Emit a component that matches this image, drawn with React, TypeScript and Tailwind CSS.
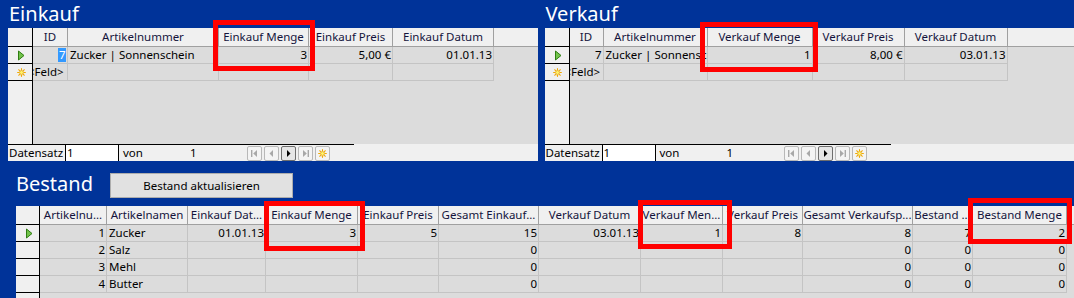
import React from 'react';

type Align = 'l' | 'r';

function PlayIcon() {
    return (
        <svg width="8" height="11" viewBox="0 0 8 11">
            <path d="M1.5 1 L7 5.5 L1.5 10 Z" fill="#72c34b" stroke="#2f7d12" strokeWidth="1" strokeLinejoin="round" />
        </svg>
    );
}

function SunIcon() {
    return (
        <svg width="9" height="9" viewBox="0 0 10 10">
            <g stroke="#f0a800" strokeWidth="1.2" strokeLinecap="round">
                <line x1="5" y1="0.7" x2="5" y2="2" />
                <line x1="5" y1="8" x2="5" y2="9.3" />
                <line x1="0.7" y1="5" x2="2" y2="5" />
                <line x1="8" y1="5" x2="9.3" y2="5" />
                <line x1="1.9" y1="1.9" x2="2.8" y2="2.8" />
                <line x1="7.2" y1="7.2" x2="8.1" y2="8.1" />
                <line x1="8.1" y1="1.9" x2="7.2" y2="2.8" />
                <line x1="1.9" y1="8.1" x2="2.8" y2="7.2" />
            </g>
            <circle cx="5" cy="5" r="2.2" fill="#fff36b" stroke="#e59a00" strokeWidth="0.8" />
        </svg>
    );
}

function NavBtn({ children, active }: { children: React.ReactNode; active?: boolean }) {
    return (
        <div
            className={
                active
                    ? 'w-[15px] h-[15px] border border-[#6e6e6e] rounded-[2px] bg-[#e6e6e6] flex items-center justify-center'
                    : 'w-[15px] h-[15px] border border-[#b8b8b8] rounded-[2px] bg-[#f4f4f4] flex items-center justify-center'
            }
        >
            {children}
        </div>
    );
}

function NavBar() {
    return (
        <div className="flex h-[17px] bg-[#f0f0f0]">
            <div className="flex w-[346px] border-t border-black">
                <div className="w-[57px] pl-[1px] flex items-center leading-none overflow-hidden whitespace-nowrap">Datensatz</div>
                <div className="w-[54px] bg-white border-x border-black pl-[1px] flex items-center leading-none">1</div>
                <div className="w-[67px] pl-[4px] flex items-center leading-none">von</div>
                <div className="w-[61px] pl-[4px] flex items-center leading-none">1</div>
                <div className="flex gap-[2px] pt-[1px]">
                    <NavBtn>
                        <svg width="9" height="9" viewBox="0 0 9 9">
                            <rect x="1" y="1" width="1.4" height="7" fill="#a8a8a8" />
                            <path d="M7 1 L3.2 4.5 L7 8 Z" fill="#a8a8a8" />
                        </svg>
                    </NavBtn>
                    <NavBtn>
                        <svg width="9" height="9" viewBox="0 0 9 9">
                            <path d="M6 1 L2.5 4.5 L6 8 Z" fill="#a8a8a8" />
                        </svg>
                    </NavBtn>
                    <NavBtn active>
                        <svg width="9" height="9" viewBox="0 0 9 9">
                            <path d="M3 1 L6.5 4.5 L3 8 Z" fill="#000" />
                        </svg>
                    </NavBtn>
                    <NavBtn>
                        <svg width="9" height="9" viewBox="0 0 9 9">
                            <path d="M2 1 L5.8 4.5 L2 8 Z" fill="#a8a8a8" />
                            <rect x="6.6" y="1" width="1.4" height="7" fill="#a8a8a8" />
                        </svg>
                    </NavBtn>
                    <NavBtn>
                        <SunIcon />
                    </NavBtn>
                </div>
            </div>
            <div className="flex-1" />
        </div>
    );
}

function HeaderRow({ tpl, labels }: { tpl: string; labels: string[] }) {
    return (
        <div className={`grid ${tpl} h-[19px]`}>
            <div className="bg-[#f0f0f0] border-r border-b border-black" />
            {labels.map((l, i) => (
                <div
                    key={i}
                    className="bg-[#f0f0f0] border-r border-b border-[#a0a0a0] flex items-center justify-center overflow-hidden whitespace-nowrap text-[#14143c]"
                >
                    {l}
                </div>
            ))}
            <div className="bg-[#f0f0f0] border-b border-[#a0a0a0]" />
        </div>
    );
}

function DataRow({
    tpl,
    marker,
    cells,
    aligns,
}: {
    tpl: string;
    marker?: React.ReactNode;
    cells: React.ReactNode[];
    aligns: Align[];
}) {
    return (
        <div className={`grid ${tpl} h-[17px]`}>
            <div className="bg-[#f0f0f0] border-r border-b border-black flex items-center justify-center pl-[2px]">{marker}</div>
            {cells.map((c, i) => (
                <div
                    key={i}
                    className={
                        aligns[i] === 'r'
                            ? 'bg-[#dcdcdc] border-r border-b border-[#c4c4c4] flex items-center justify-end overflow-hidden whitespace-nowrap pr-[1px]'
                            : 'bg-[#dcdcdc] border-r border-b border-[#c4c4c4] flex items-center justify-start overflow-hidden whitespace-nowrap pl-[2px]'
                    }
                >
                    {c}
                </div>
            ))}
            <div className="bg-[#dcdcdc]" />
        </div>
    );
}

function Panel({
    title,
    tpl,
    labels,
    row1,
    aligns,
    highlight,
}: {
    title: string;
    tpl: string;
    labels: string[];
    row1: string[];
    aligns: Align[];
    highlight?: boolean;
}) {
    const cells: React.ReactNode[] = row1.map((v, i) =>
        i === 0 && highlight ? (
            <span key={i} className="bg-[#3399ff] text-white leading-[14px] px-[0.5px]">
                {v}
            </span>
        ) : (
            v
        ),
    );
    return (
        <div className="flex-1 flex flex-col">
            <div className="h-[28px] text-[20px] leading-[28px] text-white pl-[1px]">{title}</div>
            <HeaderRow tpl={tpl} labels={labels} />
            <DataRow tpl={tpl} marker={<PlayIcon />} cells={cells} aligns={aligns} />
            <DataRow
                tpl={tpl}
                marker={<SunIcon />}
                cells={[<span key="f" className="ml-[-7px] shrink-0">&lt;Feld&gt;</span>, '', '', '', '']}
                aligns={['l', 'l', 'l', 'l', 'l']}
            />
            <div className="flex h-[63px]">
                <div className="w-[25px] bg-[#f0f0f0] border-r border-black" />
                <div className="flex-1 bg-[#dcdcdc]" />
            </div>
            <NavBar />
        </div>
    );
}

const bestandRows: string[][] = [
    ['1', 'Zucker', '01.01.13', '3', '5', '15', '03.01.13', '1', '8', '8', '7', '2'],
    ['2', 'Salz', '', '', '', '0', '', '', '', '0', '0', '0'],
    ['3', 'Mehl', '', '', '', '0', '', '', '', '0', '0', '0'],
    ['4', 'Butter', '', '', '', '0', '', '', '', '0', '0', '0'],
];

const bestandTpl =
    'grid-cols-[24px_67px_81px_78px_92px_81px_100px_102px_82px_80px_110px_60px_94px_1fr]';

export default function App() {
    return (
        <div className="relative w-[1074px] h-[298px] overflow-hidden bg-[#003399] font-['Noto_Sans',sans-serif] text-[11.5px] text-black">
            {/* Einkauf / Verkauf */}
            <div className="flex gap-[7px] pl-[8px] h-[161px]">
                <Panel
                    title="Einkauf"
                    tpl="grid-cols-[25px_35px_151px_90px_84px_101px_1fr]"
                    labels={['ID', 'Artikelnummer', 'Einkauf Menge', 'Einkauf Preis', 'Einkauf Datum']}
                    row1={['7', 'Zucker | Sonnenschein', '3', '5,00 €', '01.01.13']}
                    aligns={['r', 'l', 'r', 'r', 'r']}
                    highlight
                />
                <Panel
                    title="Verkauf"
                    tpl="grid-cols-[25px_34px_104px_105px_92px_103px_1fr]"
                    labels={['ID', 'Artikelnummer', 'Verkauf Menge', 'Verkauf Preis', 'Verkauf Datum']}
                    row1={['7', 'Zucker | Sonnenschein', '1', '8,00 €', '03.01.13']}
                    aligns={['r', 'l', 'r', 'r', 'r']}
                />
            </div>

            {/* Bestand header */}
            <div className="flex items-start h-[45px]">
                <div className="w-[110px] pl-[16px] mt-[9px] text-[20px] leading-[28px] text-white">Bestand</div>
                <button className="mt-[12px] w-[183px] h-[25px] bg-[#e1e1e1] border border-[#adadad] text-[11.5px] text-black">
                    Bestand aktualisieren
                </button>
            </div>

            {/* Bestand grid */}
            <div className="ml-[16px] flex flex-col h-[92px]">
                <HeaderRow
                    tpl={bestandTpl}
                    labels={[
                        'Artikelnu...',
                        'Artikelnamen',
                        'Einkauf Dat...',
                        'Einkauf Menge',
                        'Einkauf Preis',
                        'Gesamt Einkauf...',
                        'Verkauf Datum',
                        'Verkauf Men...',
                        'Verkauf Preis',
                        'Gesamt Verkaufsp...',
                        'Bestand ...',
                        'Bestand Menge',
                    ]}
                />
                {bestandRows.map((r, i) => (
                    <DataRow
                        key={i}
                        tpl={bestandTpl}
                        marker={i === 0 ? <PlayIcon /> : null}
                        cells={r}
                        aligns={['r', 'l', 'r', 'r', 'r', 'r', 'r', 'r', 'r', 'r', 'r', 'r']}
                    />
                ))}
                <div className="flex flex-1">
                    <div className="w-[24px] bg-[#f0f0f0] border-r border-black" />
                    <div className="flex-1 bg-[#dcdcdc]" />
                </div>
            </div>

            {/* red highlight boxes */}
            <div className="absolute left-[213px] top-[20px] w-[102px] h-[51px] border-[5px] border-[#ff0000]" />
            <div className="absolute left-[700px] top-[22px] w-[118px] h-[50px] border-[5px] border-[#ff0000]" />
            <div className="absolute left-[264px] top-[201px] w-[101px] h-[50px] border-[5px] border-[#ff0000]" />
            <div className="absolute left-[638px] top-[200px] w-[94px] h-[49px] border-[5px] border-[#ff0000]" />
            <div className="absolute left-[968px] top-[198px] w-[104px] h-[46px] border-[5px] border-[#ff0000]" />
        </div>
    );
}
